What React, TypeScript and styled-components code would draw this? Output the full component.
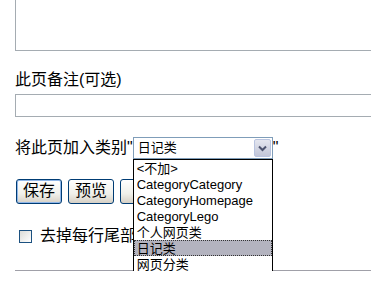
import React from 'react';
import styled, { createGlobalStyle } from 'styled-components';

const GlobalStyle = createGlobalStyle`
    body {
        margin: 0;
        overflow: hidden;
        background: #fff;
        color: #000;
        font-family: "Liberation Sans", "Noto Sans CJK SC", sans-serif;
        font-size: 16px;
    }
`;

const Form = styled.div`
    padding-left: 15px;
    display: flex;
    flex-direction: column;
    align-items: flex-start;
`;

const TextArea = styled.div`
    box-sizing: border-box;
    width: 400px;
    height: 71px;
    margin-top: -20px;
    border: 1px solid #a5acb2;
    background: #fff;
`;

const FieldLabel = styled.div`
    margin-top: 19px;
    line-height: 20px;
    height: 20px;
`;

const TextInput = styled.div`
    box-sizing: border-box;
    width: 400px;
    height: 23px;
    margin-top: 4px;
    border: 1px solid #a5acb2;
    background: #fff;
`;

const CategoryRow = styled.div`
    display: flex;
    align-items: center;
    height: 22px;
    margin-top: 20px;
    line-height: 20px;
`;

const SelectWrap = styled.div`
    position: relative;
`;

const SelectBox = styled.div`
    box-sizing: border-box;
    width: 140px;
    height: 22px;
    border: 1px solid #7f9db9;
    display: flex;
    align-items: center;
    justify-content: space-between;
    padding-left: 4px;
    font-size: 13px;
    background: #fff;
`;

const ArrowButton = styled.div`
    box-sizing: border-box;
    width: 17px;
    height: 18px;
    margin: 0 1px 0 0;
    border: 1px solid #b9c4e0;
    border-radius: 2px;
    background: linear-gradient(#e4e6ef, #c2c6d8);
    display: flex;
    align-items: center;
    justify-content: center;
`;

const OptionList = styled.div`
    position: absolute;
    top: 100%;
    left: 0;
    box-sizing: border-box;
    width: 140px;
    border: 1px solid #000;
    background: #fff;
    z-index: 2;
`;

const OptionItem = styled.div<{ $selected?: boolean }>`
    box-sizing: border-box;
    height: 16px;
    line-height: 15px;
    padding-left: 2px;
    font-size: 13px;
    white-space: nowrap;
    background: ${(p) => (p.$selected ? '#b3b3bf' : 'transparent')};
    border: 1px dotted ${(p) => (p.$selected ? '#333' : 'transparent')};
`;

const ButtonRow = styled.div`
    display: flex;
    gap: 6px;
    margin-top: 20px;
    margin-left: 1px;
`;

const Button = styled.div<{ $focused?: boolean; $pad?: number }>`
    box-sizing: border-box;
    height: 25px;
    padding: 0 ${(p) => p.$pad ?? 6}px;
    line-height: 22px;
    border: 1px solid #003c74;
    border-radius: 3px;
    background: linear-gradient(#ffffff 0%, #f0f0ea 60%, #d6d0c5 100%);
    box-shadow: ${(p) => (p.$focused ? 'inset 0 0 0 1px #8fb6e8' : 'inset 0 -1px 0 #d8d2c8')};
    white-space: nowrap;
`;

const CheckRow = styled.div`
    display: flex;
    align-items: center;
    gap: 8px;
    height: 20px;
    margin-top: 22px;
    margin-left: 4px;
    line-height: 20px;
    white-space: nowrap;
`;

const CheckBox = styled.div`
    box-sizing: border-box;
    width: 13px;
    height: 13px;
    border: 1px solid #1c5180;
    background: linear-gradient(135deg, #dcdcd7, #ffffff);
`;

const Rule = styled.div`
    width: 400px;
    height: 1px;
    margin-top: 24px;
    background: #a0a0a8;
`;

const options = ['<不加>', 'CategoryCategory', 'CategoryHomepage', 'CategoryLego', '个人网页类', '日记类', '网页分类'];

export default function App() {
    return (
        <>
            <GlobalStyle />
            <Form>
                <TextArea />
                <FieldLabel>此页备注(可选)</FieldLabel>
                <TextInput />
                <CategoryRow>
                    <span>将此页加入类别"</span>
                    <SelectWrap>
                        <SelectBox>
                            <span>日记类</span>
                            <ArrowButton>
                                <svg width="9" height="7" viewBox="0 0 9 7">
                                    <path d="M1 1.5 L4.5 5 L8 1.5" fill="none" stroke="#4d5470" strokeWidth="2" />
                                </svg>
                            </ArrowButton>
                        </SelectBox>
                        <OptionList>
                            {options.map((o) => (
                                <OptionItem key={o} $selected={o === '日记类'}>
                                    {o}
                                </OptionItem>
                            ))}
                        </OptionList>
                    </SelectWrap>
                    <span>"</span>
                </CategoryRow>
                <ButtonRow>
                    <Button $focused>保存</Button>
                    <Button>预览</Button>
                    <Button $pad={18}>显示更改</Button>
                </ButtonRow>
                <CheckRow>
                    <CheckBox />
                    <span>去掉每行尾部的空格</span>
                </CheckRow>
                <Rule />
            </Form>
        </>
    );
}
